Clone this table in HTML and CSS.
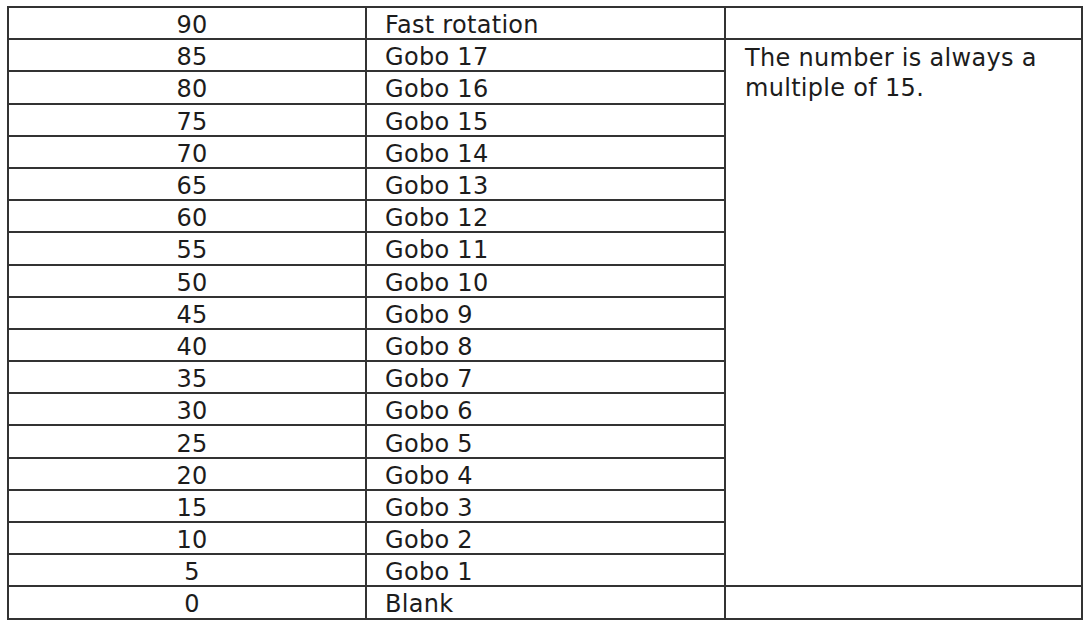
FILE: index.html
```html
<!DOCTYPE html>
<html lang="en">
<head>
<meta charset="utf-8">
<title>Gobo wheel values</title>
<link rel="stylesheet" href="styles.css">
</head>
<body>
<table class="gobo-table">
  <colgroup>
    <col class="col-value">
    <col class="col-name">
    <col class="col-note">
  </colgroup>
  <tbody>
    <tr><td class="value">90</td><td class="name">Fast rotation</td><td class="note"></td></tr>
    <tr><td class="value">85</td><td class="name">Gobo 17</td><td class="note note-main" rowspan="17">The number is always a multiple of 15.</td></tr>
    <tr><td class="value">80</td><td class="name">Gobo 16</td></tr>
    <tr><td class="value">75</td><td class="name">Gobo 15</td></tr>
    <tr><td class="value">70</td><td class="name">Gobo 14</td></tr>
    <tr><td class="value">65</td><td class="name">Gobo 13</td></tr>
    <tr><td class="value">60</td><td class="name">Gobo 12</td></tr>
    <tr><td class="value">55</td><td class="name">Gobo 11</td></tr>
    <tr><td class="value">50</td><td class="name">Gobo 10</td></tr>
    <tr><td class="value">45</td><td class="name">Gobo 9</td></tr>
    <tr><td class="value">40</td><td class="name">Gobo 8</td></tr>
    <tr><td class="value">35</td><td class="name">Gobo 7</td></tr>
    <tr><td class="value">30</td><td class="name">Gobo 6</td></tr>
    <tr><td class="value">25</td><td class="name">Gobo 5</td></tr>
    <tr><td class="value">20</td><td class="name">Gobo 4</td></tr>
    <tr><td class="value">15</td><td class="name">Gobo 3</td></tr>
    <tr><td class="value">10</td><td class="name">Gobo 2</td></tr>
    <tr><td class="value">5</td><td class="name">Gobo 1</td></tr>
    <tr><td class="value">0</td><td class="name">Blank</td><td class="note"></td></tr>
  </tbody>
</table>
</body>
</html>
```
FILE: styles.css
```css
html, body {
  margin: 0;
  padding: 0;
  background: #ffffff;
}

body {
  padding: 6px 0 0 7px;
  font-family: "DejaVu Sans", "Liberation Sans", sans-serif;
  font-size: 24px;
  letter-spacing: 0.3px;
  color: #1c1c1c;
}

.gobo-table {
  border-collapse: separate;
  border-spacing: 0;
  table-layout: fixed;
  width: 1076px;
  border-top: 2px solid #333333;
  border-left: 2px solid #333333;
}

.col-value { width: 358px; }
.col-name { width: 359px; }
.col-note { width: 357px; }

.gobo-table tr {
  height: 32.2px;
}

.gobo-table td {
  box-sizing: border-box;
  padding: 4px 0 0 0;
  line-height: 26px;
  border-right: 2px solid #333333;
  border-bottom: 2px solid #333333;
  vertical-align: middle;
  white-space: nowrap;
}

.gobo-table .value {
  text-align: center;
  padding-left: 10px;
}

.gobo-table .name {
  padding-left: 18px;
  text-align: left;
}

.gobo-table .note {
  padding-left: 19px;
  padding-right: 14px;
  text-align: left;
}

.gobo-table .note-main {
  vertical-align: top;
  white-space: normal;
  line-height: 30px;
  padding-top: 3px;
}
```
